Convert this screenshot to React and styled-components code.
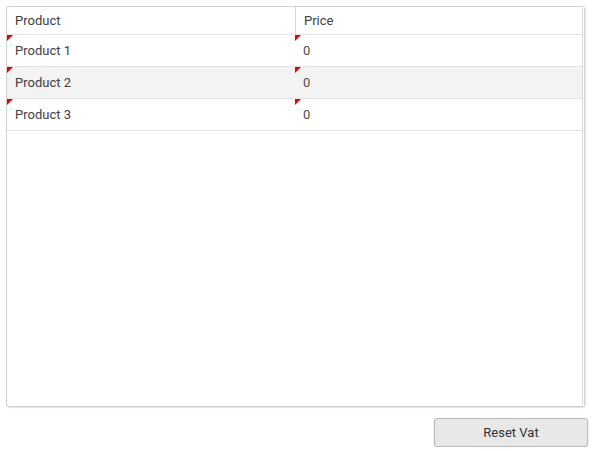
import React from "react";
import styled, { createGlobalStyle } from "styled-components";

const GlobalStyle = createGlobalStyle`
  html, body {
    margin: 0;
    padding: 0;
    background: #fff;
    font-family: Roboto, "Noto Sans", sans-serif;
  }
`;

const Page = styled.div`
  display: flex;
  flex-direction: column;
  align-items: flex-end;
  gap: 11px;
  padding: 6px 4px 0 6px;
  width: 592px;
  box-sizing: border-box;
`;

const Grid = styled.div`
  width: 579px;
  height: 401px;
  box-sizing: border-box;
  border: 1px solid #d0d0d0;
  border-right: 3px double #d8d8d8;
  border-radius: 3px;
  box-shadow: 1px 1px 1px #e2e2e2;
  display: flex;
  flex-direction: column;
  overflow: hidden;
  align-self: flex-start;
`;

const Row = styled.div`
  display: grid;
  grid-template-columns: 288px 1fr;
  height: ${(p) => (p.$header ? 28 : 32)}px;
  border-bottom: 1px solid #e3e3e3;
  background: ${(p) => (p.$alt ? "#f3f3f3" : "#fff")};
  box-sizing: border-box;
`;

const Cell = styled.div`
  position: relative;
  display: flex;
  align-items: center;
  padding: 0 8px;
  font-size: 13px;
  color: ${(p) => (p.$value ? "#5a4a3c" : "#404040")};
  border-left: ${(p) => (p.$divide ? "1px solid #d6d6d6" : "none")};
`;

// red corner flag for modified cells
const Dirty = styled.span`
  position: absolute;
  top: 0;
  left: 0;
  width: 0;
  height: 0;
  border-top: 6px solid #e60000;
  border-right: 6px solid transparent;
`;

const Button = styled.button`
  width: 154px;
  height: 29px;
  border: 1px solid #b9b9b9;
  border-radius: 3px;
  background: #e8e8e8;
  box-shadow: 0 1px 2px rgba(0, 0, 0, 0.15);
  font-family: Roboto, sans-serif;
  font-size: 13px;
  color: #333;
  cursor: pointer;
`;

const rows = [
  { name: "Product 1", price: 0 },
  { name: "Product 2", price: 0 },
  { name: "Product 3", price: 0 },
];

export default function App() {
  return (
    <>
      <GlobalStyle />
      <Page>
        <Grid>
          <Row $header>
            <Cell>Product</Cell>
            <Cell $divide>Price</Cell>
          </Row>
          {rows.map((r, i) => (
            <Row key={r.name} $alt={i % 2 === 1}>
              <Cell>
                <Dirty />
                {r.name}
              </Cell>
              <Cell $value>
                <Dirty />
                {r.price}
              </Cell>
            </Row>
          ))}
        </Grid>
        <Button>Reset Vat</Button>
      </Page>
    </>
  );
}
